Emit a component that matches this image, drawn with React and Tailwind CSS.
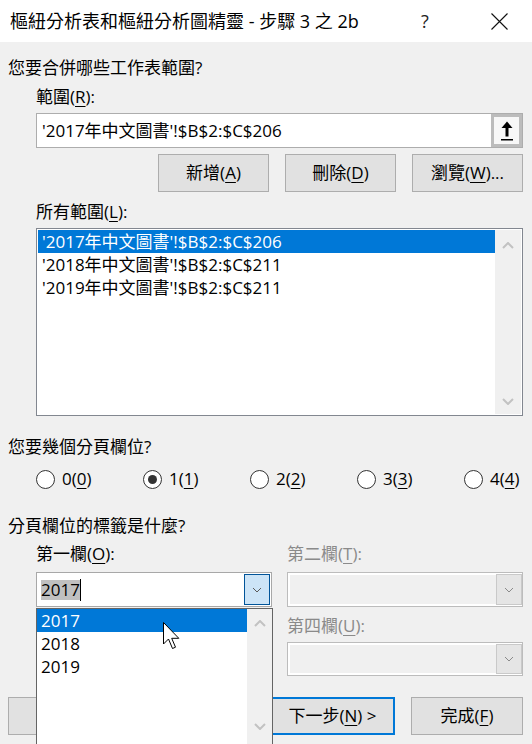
import React from 'react';

const U = ({ children }) => <span className="underline underline-offset-[3px] decoration-1">{children}</span>;

const ComboChevron = ({ color = '#5a5a5a' }) => (
  <svg width="10" height="6" viewBox="0 0 10 6">
    <polyline points="1,1 5,5 9,1" fill="none" stroke={color} strokeWidth="1" />
  </svg>
);

const ScrollChevron = ({ up }) => (
  <svg width="12" height="7" viewBox="0 0 12 7">
    <polyline
      points={up ? '1,6 6,1 11,6' : '1,1 6,6 11,1'}
      fill="none"
      stroke="#c2c2c2"
      strokeWidth="2"
    />
  </svg>
);

const Button = ({ children, width = 'w-[111px]', focused }) => (
  <div
    className={`${width} shrink-0 h-[38px] flex items-center justify-center bg-[#e1e1e1] ${
      focused ? 'border-2 border-[#0078d7]' : 'border border-[#adadad]'
    }`}
  >
    {children}
  </div>
);

const DisabledCombo = ({ height }) => (
  <div className={`${height} flex border border-[#bcbcbc] bg-white pl-[2px] py-[2px]`}>
    <div className="flex-1 bg-[#f0f0f0]" />
    <div className="w-[26px] -my-[1px] flex items-center justify-center bg-[#e5e5e5] border border-[#c9c9c9]">
      <ComboChevron color="#8a8a8a" />
    </div>
  </div>
);

const Radio = ({ label, mnemonic, checked }) => (
  <div className="w-[107px] shrink-0 h-[24px] flex items-center gap-[7px]">
    <div className="w-[19px] h-[19px] rounded-full border border-[#333333] bg-white flex items-center justify-center">
      {checked && <div className="w-[9px] h-[9px] rounded-full bg-[#333333]" />}
    </div>
    <span>
      {label}(<U>{mnemonic}</U>)
    </span>
  </div>
);

export default function App() {
  const ranges = [
    "'2017年中文圖書'!$B$2:$C$206",
    "'2018年中文圖書'!$B$2:$C$211",
    "'2019年中文圖書'!$B$2:$C$211",
  ];
  const years = ['2017', '2018', '2019'];

  return (
    <div className="w-[532px] h-[744px] bg-[#f0f0f0] relative overflow-hidden text-[17px] text-black font-['Open_Sans','Noto_Sans_CJK_TC',sans-serif]">
      {/* title bar */}
      <div className="h-[42px] bg-white flex items-center pl-[10px] pr-[24px]">
        <span className="flex-1 text-[18px]">樞紐分析表和樞紐分析圖精靈 - 步驟 3 之 2b</span>
        <span className="w-[20px] text-center text-[18px] text-[#222]">?</span>
        <svg className="ml-[56px]" width="17" height="17" viewBox="0 0 17 17">
          <path d="M0.5 0.5 L16.5 16.5 M16.5 0.5 L0.5 16.5" stroke="#111" strokeWidth="1.1" />
        </svg>
      </div>

      <div className="pl-[8px] pr-[9px]">
        <div className="mt-[14px] leading-[24px]">您要合併哪些工作表範圍?</div>
        <div className="pl-[28px]">
          <div className="mt-[5px] leading-[24px]">
            範圍(<U>R</U>):
          </div>
          <div className="mt-[4px] h-[35px] flex border border-[#adadad] bg-white">
            <div className="flex-1 pl-[5px] leading-[33px]">{ranges[0]}</div>
            <div className="w-[31px] h-[33px] border-[3px] border-[#bcbcbc] bg-[#f7f7f7] flex items-center justify-center">
              <svg width="12" height="20" viewBox="0 0 12 20">
                <polygon points="6,0.5 0.5,7 11.5,7" fill="#000" />
                <rect x="4.5" y="6.5" width="3" height="9" fill="#000" />
                <rect x="0" y="18" width="12" height="1.5" fill="#000" />
              </svg>
            </div>
          </div>
          <div className="mt-[6px] flex justify-end gap-[16px]">
            <Button>
              新增(<U>A</U>)
            </Button>
            <Button>
              刪除(<U>D</U>)
            </Button>
            <Button>
              瀏覽(<U>W</U>)...
            </Button>
          </div>
          <div className="mt-[8px] leading-[24px]">
            所有範圍(<U>L</U>):
          </div>
          <div className="mt-[4px] h-[188px] flex border border-[#828790] bg-white p-[1px]">
            <div className="flex-1 flex flex-col">
              {ranges.map((r, i) => (
                <div
                  key={r}
                  className={`h-[23px] leading-[23px] pl-[4px] ${i === 0 ? 'bg-[#0078d7] text-white' : ''}`}
                >
                  {r}
                </div>
              ))}
            </div>
            <div className="w-[26px] bg-[#f0f0f0] flex flex-col items-center justify-between pt-[12px] pb-[9px]">
              <ScrollChevron up />
              <ScrollChevron />
            </div>
          </div>
        </div>

        <div className="mt-[19px] leading-[24px]">您要幾個分頁欄位?</div>
        <div className="mt-[8px] pl-[28px] flex">
          <Radio label="0" mnemonic="0" />
          <Radio label="1" mnemonic="1" checked />
          <Radio label="2" mnemonic="2" />
          <Radio label="3" mnemonic="3" />
          <Radio label="4" mnemonic="4" />
        </div>

        <div className="mt-[23px] leading-[24px]">分頁欄位的標籤是什麼?</div>
        <div className="pl-[28px] grid grid-cols-2 gap-x-[15px]">
          <div className="flex flex-col">
            <div className="mt-[4px] leading-[24px]">
              第一欄(<U>O</U>):
            </div>
            <div className="mt-[6px] h-[35px] flex border border-[#a8a8a8] bg-white">
              <div className="flex-1 flex items-center pl-[4px]">
                <span className="bg-[#c0c0c0] leading-[20px]">2017</span>
                <span className="w-px h-[22px] bg-black" />
              </div>
              <div className="w-[26px] m-px flex items-center justify-center bg-[#cce4f7] border border-[#005499]">
                <ComboChevron />
              </div>
            </div>
            {/* third column field sits under the open list */}
            <div className="mt-[7px] h-[24px]" />
            <div className="mt-[4px]">
              <DisabledCombo height="h-[34px]" />
            </div>
          </div>
          <div className="flex flex-col">
            <div className="mt-[4px] leading-[24px] text-[#8a8a8a]">
              第二欄(<U>T</U>):
            </div>
            <div className="mt-[6px]">
              <DisabledCombo height="h-[35px]" />
            </div>
            <div className="mt-[7px] leading-[24px] text-[#8a8a8a]">
              第四欄(<U>U</U>):
            </div>
            <div className="mt-[4px]">
              <DisabledCombo height="h-[34px]" />
            </div>
          </div>
        </div>

        <div className="mt-[21px] flex gap-[16px]">
          <Button width="w-[116px]" />
          <Button width="w-[114px]" />
          <Button width="w-[125px]" focused>
            下一步(<U>N</U>) &gt;
          </Button>
          <Button width="w-[112px]">
            完成(<U>F</U>)
          </Button>
        </div>
      </div>

      {/* open dropdown list */}
      <div className="absolute left-[36px] top-[608px] w-[237px] h-[140px] flex border border-[#646464] bg-white">
        <div className="flex-1 flex flex-col">
          {years.map((y, i) => (
            <div
              key={y}
              className={`h-[23px] leading-[23px] pl-[4px] ${i === 0 ? 'bg-[#0078d7] text-white' : ''}`}
            >
              {y}
            </div>
          ))}
        </div>
        <div className="w-[25px] bg-[#f0f0f0] flex flex-col items-center pt-[11px]">
          <ScrollChevron up />
          <div className="mt-[96px]">
            <ScrollChevron />
          </div>
        </div>
      </div>

      {/* mouse pointer */}
      <svg className="absolute left-[163px] top-[622px]" width="18" height="28" viewBox="0 0 18 28">
        <path
          d="M0.5 0.5 L0.5 22 L5.5 17 L9.5 26.5 L12.5 25.2 L8.7 16.3 L15.8 16.3 Z"
          fill="#fff"
          stroke="#000"
          strokeWidth="1"
          strokeLinejoin="miter"
        />
      </svg>
    </div>
  );
}
